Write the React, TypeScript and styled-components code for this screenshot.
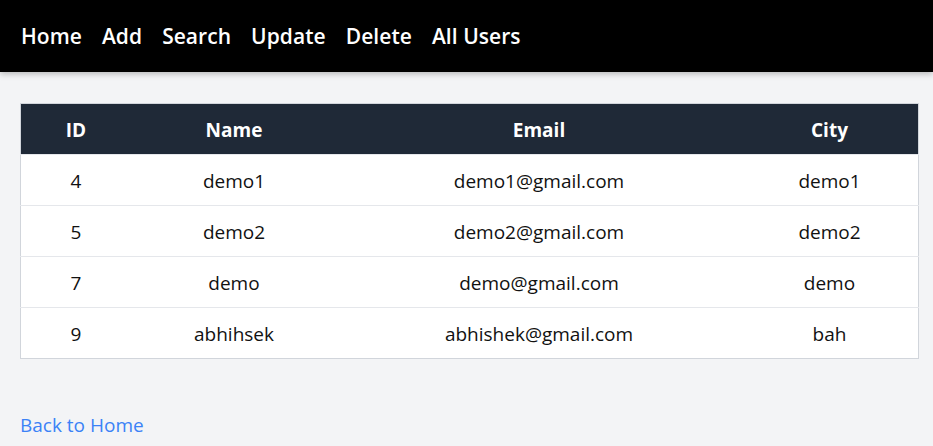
import React from "react";
import styled, { createGlobalStyle } from "styled-components";

const Global = createGlobalStyle`
  html, body { margin: 0; padding: 0; }
  body {
    background: #f3f4f6;
    font-family: "Open Sans", "Noto Sans", sans-serif;
    color: #111;
  }
`;

const Nav = styled.nav`
  height: 72px;
  background: #000;
  display: flex;
  align-items: center;
  gap: 20px;
  padding: 0 20px 0 21px;
  box-shadow: 0 2px 6px rgba(0, 0, 0, 0.25);
  position: relative;
`;

const NavLink = styled.a`
  color: #fff;
  font-size: 21px;
  font-weight: 600;
  letter-spacing: 0.05px;
  text-decoration: none;
  margin-top: -1px;
`;

const Main = styled.main`
  padding: 31px 14px 0 20px;
`;

const Table = styled.table`
  width: 899px;
  border-collapse: collapse;
  border: 1px solid #d1d5db;
  background: #fff;
  table-layout: fixed;
`;

const Th = styled.th<{ $w: number }>`
  width: ${(p) => p.$w}px;
  height: 49px;
  padding: 1px 0 0;
  background: #1f2937;
  color: #fff;
  font-size: 19px;
  font-weight: 700;
  text-align: center;
`;

const Td = styled.td`
  height: 49px;
  padding: 1px 0 0;
  font-size: 19px;
  text-align: center;
  color: #111;
`;

const Row = styled.tr`
  border-top: 1px solid #e5e7eb;
`;

const Back = styled.a`
  display: inline-block;
  margin-top: 53px;
  color: #3b82f6;
  font-size: 19px;
  text-decoration: none;
`;

const users = [
  { id: 4, name: "demo1", email: "demo1@gmail.com", city: "demo1" },
  { id: 5, name: "demo2", email: "demo2@gmail.com", city: "demo2" },
  { id: 7, name: "demo", email: "demo@gmail.com", city: "demo" },
  { id: 9, name: "abhihsek", email: "abhishek@gmail.com", city: "bah" },
];

export default function App() {
  return (
    <>
      <Global />
      <Nav>
        {["Home", "Add", "Search", "Update", "Delete", "All Users"].map((l) => (
          <NavLink key={l} href="#">
            {l}
          </NavLink>
        ))}
      </Nav>
      <Main>
        <Table>
          <thead>
            <tr>
              <Th $w={110}>ID</Th>
              <Th $w={206}>Name</Th>
              <Th $w={404}>Email</Th>
              <Th $w={177}>City</Th>
            </tr>
          </thead>
          <tbody>
            {users.map((u) => (
              <Row key={u.id}>
                <Td>{u.id}</Td>
                <Td>{u.name}</Td>
                <Td>{u.email}</Td>
                <Td>{u.city}</Td>
              </Row>
            ))}
          </tbody>
        </Table>
        <Back href="#">Back to Home</Back>
      </Main>
    </>
  );
}
